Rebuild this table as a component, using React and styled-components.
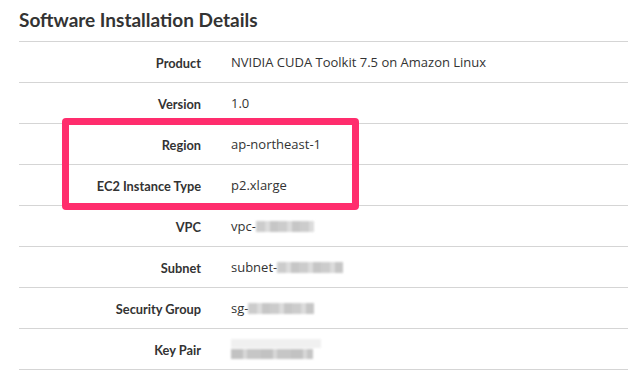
import React from "react";
import styled, { createGlobalStyle } from "styled-components";

const GlobalStyle = createGlobalStyle`
  html, body {
    margin: 0;
    padding: 0;
    background: #fff;
  }
  body {
    font-family: "Open Sans", "Liberation Sans", sans-serif;
    color: #333;
  }
`;

const Page = styled.div`
  width: 639px;
  height: 381px;
  padding: 0 11px 0 19px;
  box-sizing: border-box;
  overflow: hidden;
`;

const Title = styled.h2`
  margin: 0;
  height: 42px;
  display: flex;
  align-items: center;
  font-family: Lato, "Open Sans", sans-serif;
  font-size: 19px;
  font-weight: 700;
  color: #333;
  border-bottom: 1px solid #d5d5d5;
  box-sizing: border-box;
  padding-bottom: 2px;
`;

const Table = styled.div`
  position: relative;
`;

const Row = styled.div`
  display: grid;
  grid-template-columns: 182px 1fr;
  column-gap: 30px;
  align-items: center;
  height: 41px;
  border-bottom: 1px solid #d5d5d5;
  box-sizing: border-box;
  font-size: 13px;
`;

const Label = styled.div`
  text-align: right;
  font-family: Lato, "Open Sans", sans-serif;
  font-size: 12.8px;
  font-weight: 700;
  color: #333;
  padding-top: 1px;
`;

const Value = styled.div`
  display: flex;
  align-items: center;
  color: #333;
`;

// blurred-out ids
const Redacted = styled.span`
  display: inline-block;
  width: ${(p) => p.w}px;
  height: ${(p) => p.h || 11}px;
  background: repeating-linear-gradient(
    90deg,
    #c4c4c4 0 9px,
    #d6d6d6 9px 14px,
    #bdbdbd 14px 22px
  );
  filter: blur(1.2px);
  opacity: 0.85;
`;

const KeyBlock = styled.span`
  display: inline-flex;
  flex-direction: column;
  gap: 1px;
  filter: blur(1.2px);
  span:first-child {
    width: 90px;
    height: 9px;
    background: #f0f0f0;
  }
  span:last-child {
    width: 82px;
    height: 10px;
    background: repeating-linear-gradient(
      90deg,
      #c2c2c2 0 12px,
      #d8d8d8 12px 16px,
      #c6c6c6 16px 30px
    );
  }
`;

const Highlight = styled.div`
  position: absolute;
  left: 43px;
  top: 76px;
  width: 297px;
  height: 92px;
  border: 7px solid #ff2d6d;
  border-radius: 4px;
  box-sizing: border-box;
  pointer-events: none;
`;

const rows = [
  { label: "Product", value: "NVIDIA CUDA Toolkit 7.5 on Amazon Linux" },
  { label: "Version", value: "1.0" },
  { label: "Region", value: "ap-northeast-1" },
  { label: "EC2 Instance Type", value: "p2.xlarge" },
  { label: "VPC", value: "vpc-", hide: 58 },
  { label: "Subnet", value: "subnet-", hide: 66 },
  { label: "Security Group", value: "sg-", hide: 66 },
  { label: "Key Pair", key: true },
];

export default function App() {
  return (
    <Page>
      <GlobalStyle />
      <Title>Software Installation Details</Title>
      <Table>
        {rows.map((r) => (
          <Row key={r.label}>
            <Label>{r.label}</Label>
            <Value>
              {r.value}
              {r.hide && <Redacted w={r.hide} />}
              {r.key && (
                <KeyBlock>
                  <span />
                  <span />
                </KeyBlock>
              )}
            </Value>
          </Row>
        ))}
        <Highlight />
      </Table>
    </Page>
  );
}
